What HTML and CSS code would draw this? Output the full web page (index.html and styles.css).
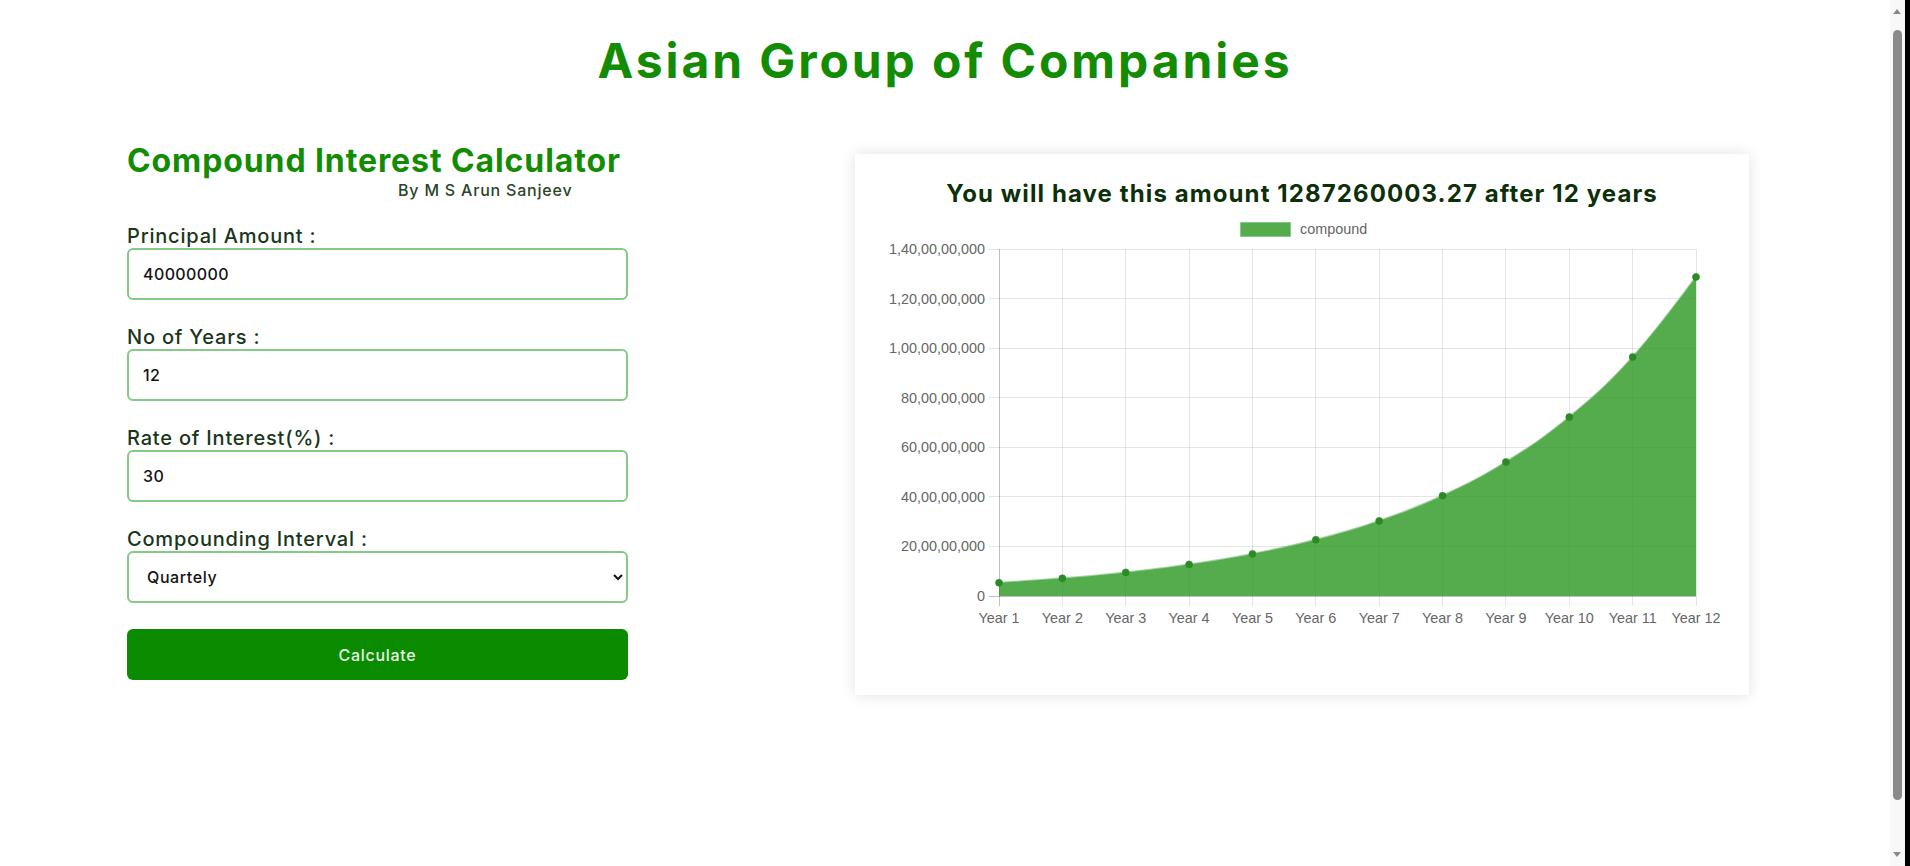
FILE: index.html
```html
<!DOCTYPE html>
<html lang="en">
<head>
<meta charset="utf-8">
<title>Compound Interest Calculator</title>
<link rel="stylesheet" href="styles.css">
</head>
<body>
<h1 class="brand">Asian Group of Companies</h1>
<main class="layout">
  <section class="calc">
    <h2 class="calc-title">Compound Interest Calculator</h2>
    <p class="byline">By M S Arun Sanjeev</p>
    <form class="calc-form">
      <div class="field">
        <label class="field-label">Principal Amount :</label>
        <input class="field-input" type="text" value="40000000">
      </div>
      <div class="field">
        <label class="field-label">No of Years :</label>
        <input class="field-input" type="text" value="12">
      </div>
      <div class="field">
        <label class="field-label">Rate of Interest(%) :</label>
        <input class="field-input" type="text" value="30">
      </div>
      <div class="field">
        <label class="field-label">Compounding Interval :</label>
        <select class="field-input field-select">
          <option>Yearly</option>
          <option>Half Yearly</option>
          <option selected>Quartely</option>
          <option>Monthly</option>
        </select>
      </div>
      <button class="calc-btn" type="button">Calculate</button>
    </form>
  </section>
  <section class="chart-card">
    <h3 class="chart-title">You will have this amount 1287260003.27 after 12 years</h3>
    <svg class="chart" width="894" height="420" viewBox="0 0 894 420" xmlns="http://www.w3.org/2000/svg">
      <rect x="385.5" y="7.5" width="50" height="14" fill="rgba(41,151,31,0.8)" stroke="rgba(120,190,120,0.6)" stroke-width="1"/>
      <text class="tick" x="445" y="19">compound</text>

      <g stroke="rgba(0,0,0,0.1)" stroke-width="1" shape-rendering="crispEdges">
        <line x1="134" y1="34" x2="841" y2="34"/>
        <line x1="134" y1="83.57" x2="841" y2="83.57"/>
        <line x1="134" y1="133.14" x2="841" y2="133.14"/>
        <line x1="134" y1="182.71" x2="841" y2="182.71"/>
        <line x1="134" y1="232.29" x2="841" y2="232.29"/>
        <line x1="134" y1="281.86" x2="841" y2="281.86"/>
        <line x1="134" y1="331.43" x2="841" y2="331.43"/>
        <line x1="207.36" y1="34" x2="207.36" y2="391"/>
        <line x1="270.73" y1="34" x2="270.73" y2="391"/>
        <line x1="334.09" y1="34" x2="334.09" y2="391"/>
        <line x1="397.45" y1="34" x2="397.45" y2="391"/>
        <line x1="460.82" y1="34" x2="460.82" y2="391"/>
        <line x1="524.18" y1="34" x2="524.18" y2="391"/>
        <line x1="587.55" y1="34" x2="587.55" y2="391"/>
        <line x1="650.91" y1="34" x2="650.91" y2="391"/>
        <line x1="714.27" y1="34" x2="714.27" y2="391"/>
        <line x1="777.64" y1="34" x2="777.64" y2="391"/>
        <line x1="841" y1="34" x2="841" y2="391"/>
      </g>
      <g stroke="rgba(0,0,0,0.25)" stroke-width="1" shape-rendering="crispEdges">
        <line x1="144" y1="34" x2="144" y2="391"/>
        <line x1="134" y1="381" x2="841" y2="381"/>
      </g>

      <path fill="rgba(41,151,31,0.8)" d="M144,367.76 C144,367.76 182.01,365.39 207.36,363.32 C232.71,361.25 245.38,360.16 270.73,357.39 C296.08,354.62 308.75,353.16 334.09,349.46 C359.43,345.76 372.10,343.83 397.45,338.89 C422.80,333.95 435.47,331.36 460.82,324.76 C486.17,318.16 498.83,314.70 524.18,305.89 C549.53,297.08 562.20,292.46 587.55,280.69 C612.90,268.92 625.57,262.76 650.91,247.04 C676.25,231.32 688.92,223.09 714.27,202.10 C739.62,181.11 752.29,170.12 777.64,142.09 C802.99,114.06 841,61.94 841,61.94 L841,381 L144,381 Z"/>
      <path fill="none" stroke="rgba(90,175,85,0.55)" stroke-width="2" d="M144,367.76 C144,367.76 182.01,365.39 207.36,363.32 C232.71,361.25 245.38,360.16 270.73,357.39 C296.08,354.62 308.75,353.16 334.09,349.46 C359.43,345.76 372.10,343.83 397.45,338.89 C422.80,333.95 435.47,331.36 460.82,324.76 C486.17,318.16 498.83,314.70 524.18,305.89 C549.53,297.08 562.20,292.46 587.55,280.69 C612.90,268.92 625.57,262.76 650.91,247.04 C676.25,231.32 688.92,223.09 714.27,202.10 C739.62,181.11 752.29,170.12 777.64,142.09 C802.99,114.06 841,61.94 841,61.94"/>

      <g fill="#2b8a25" stroke="rgba(40,140,35,0.6)" stroke-width="1">
        <circle cx="144" cy="367.76" r="3.5"/>
        <circle cx="207.36" cy="363.32" r="3.5"/>
        <circle cx="270.73" cy="357.39" r="3.5"/>
        <circle cx="334.09" cy="349.46" r="3.5"/>
        <circle cx="397.45" cy="338.89" r="3.5"/>
        <circle cx="460.82" cy="324.76" r="3.5"/>
        <circle cx="524.18" cy="305.89" r="3.5"/>
        <circle cx="587.55" cy="280.69" r="3.5"/>
        <circle cx="650.91" cy="247.04" r="3.5"/>
        <circle cx="714.27" cy="202.10" r="3.5"/>
        <circle cx="777.64" cy="142.09" r="3.5"/>
        <circle cx="841" cy="61.94" r="3.5"/>
      </g>

      <g class="tick" text-anchor="end">
        <text x="130" y="39">1,40,00,00,000</text>
        <text x="130" y="88.57">1,20,00,00,000</text>
        <text x="130" y="138.14">1,00,00,00,000</text>
        <text x="130" y="187.71">80,00,00,000</text>
        <text x="130" y="237.29">60,00,00,000</text>
        <text x="130" y="286.86">40,00,00,000</text>
        <text x="130" y="336.43">20,00,00,000</text>
        <text x="130" y="386">0</text>
      </g>
      <g class="tick" text-anchor="middle">
        <text x="144" y="408">Year 1</text>
        <text x="207.36" y="408">Year 2</text>
        <text x="270.73" y="408">Year 3</text>
        <text x="334.09" y="408">Year 4</text>
        <text x="397.45" y="408">Year 5</text>
        <text x="460.82" y="408">Year 6</text>
        <text x="524.18" y="408">Year 7</text>
        <text x="587.55" y="408">Year 8</text>
        <text x="650.91" y="408">Year 9</text>
        <text x="714.27" y="408">Year 10</text>
        <text x="777.64" y="408">Year 11</text>
        <text x="841" y="408">Year 12</text>
      </g>
    </svg>
  </section>
</main>
<div class="scrollbar" aria-hidden="true">
  <span class="sb-arrow sb-up"></span>
  <span class="sb-thumb"></span>
  <span class="sb-arrow sb-down"></span>
</div>
</body>
</html>
```

FILE: styles.css
```css
html {
  min-height: 100%;
}
body {
  margin: 0;
  padding-right: 20px;
  min-height: 880px;
  background: #ffffff;
  font-family: Inter, "Open Sans", "Liberation Sans", sans-serif;
}
.brand {
  margin: 33px 0 54px;
  text-align: center;
  font-size: 48px;
  line-height: 56px;
  font-weight: 700;
  letter-spacing: 2.9px;
  color: #138c04;
}
.layout {
  display: flex;
  align-items: flex-start;
  padding-left: 127px;
}
.calc {
  width: 501px;
  display: flex;
  flex-direction: column;
}
.calc-title {
  margin: 0;
  font-size: 32px;
  line-height: 36px;
  font-weight: 700;
  letter-spacing: 0.9px;
  color: #138c04;
}
.byline {
  margin: 1px 0 0;
  padding-left: 271px;
  font-size: 16px;
  line-height: 20px;
  font-weight: 500;
  letter-spacing: 0.8px;
  color: #2a452a;
}
.calc-form {
  margin-top: 24px;
  display: flex;
  flex-direction: column;
  gap: 25px;
}
.field {
  display: flex;
  flex-direction: column;
}
.field-label {
  font-size: 20px;
  line-height: 24px;
  font-weight: 500;
  letter-spacing: 0.8px;
  color: #1a361a;
}
.field-input {
  box-sizing: border-box;
  width: 501px;
  height: 52px;
  padding: 0 14px;
  border: 2px solid #86c886;
  border-radius: 6px;
  background: #ffffff;
  font-family: Inter, "Open Sans", "Liberation Sans", sans-serif;
  font-size: 16px;
  font-weight: 500;
  letter-spacing: 0.4px;
  color: #141414;
  outline: none;
}
.field-select {
  padding-left: 14px;
  padding-right: 6px;
  letter-spacing: 0.6px;
}
.calc-btn {
  margin-top: 1px;
  height: 51px;
  border: none;
  border-radius: 6px;
  background: #0a8b00;
  color: #e6f4e4;
  font-family: Inter, "Open Sans", "Liberation Sans", sans-serif;
  font-size: 16px;
  font-weight: 500;
  letter-spacing: 0.7px;
}
.chart-card {
  box-sizing: border-box;
  margin-left: 227px;
  margin-top: 11px;
  width: 894px;
  height: 541px;
  padding-top: 26px;
  background: #ffffff;
  box-shadow: 0 0 14px rgba(0, 0, 0, 0.12);
}
.chart-title {
  margin: 0 0 7px;
  text-align: center;
  font-size: 24px;
  line-height: 28px;
  font-weight: 700;
  letter-spacing: 1.1px;
  color: #0d300b;
}
.chart {
  display: block;
}
.tick {
  font-family: "Liberation Sans", Arial, sans-serif;
  font-size: 14.4px;
  fill: #666666;
}
.scrollbar {
  position: fixed;
  top: 0;
  right: 0;
  width: 20px;
  height: 100vh;
  box-sizing: border-box;
  border-right: 5px solid #000000;
  background: #f8f8f8;
}
.sb-thumb {
  position: absolute;
  top: 30px;
  bottom: 66px;
  left: 3px;
  width: 9px;
  border-radius: 5px;
  background: #8a8a8a;
}
.sb-arrow {
  position: absolute;
  left: 3px;
  width: 0;
  height: 0;
  border-left: 4.5px solid transparent;
  border-right: 4.5px solid transparent;
}
.sb-up {
  top: 9px;
  border-bottom: 5px solid #8a8a8a;
}
.sb-down {
  bottom: 9px;
  border-top: 5px solid #8a8a8a;
}
```
